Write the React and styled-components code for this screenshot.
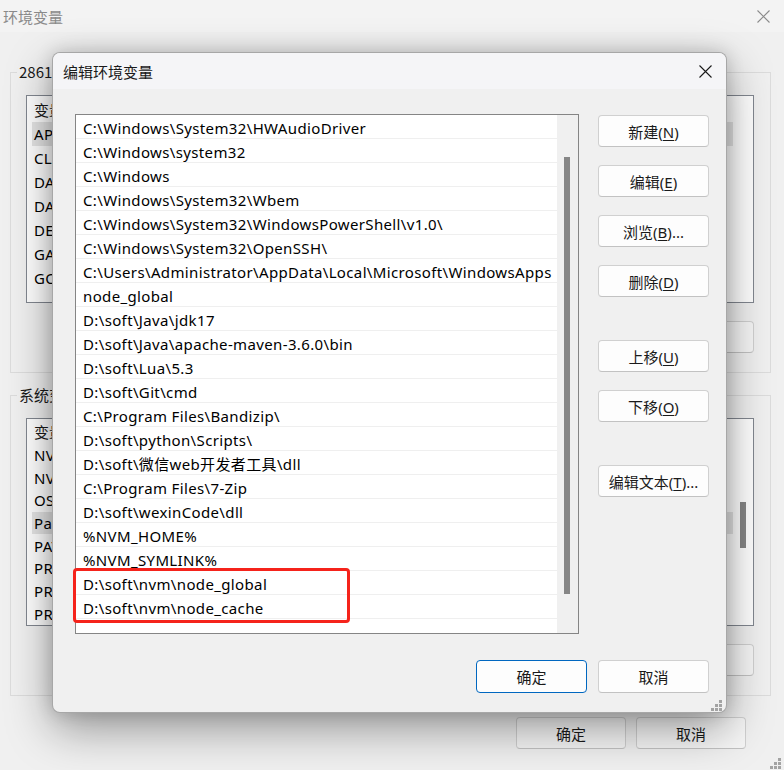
import React from "react";
import styled, { createGlobalStyle } from "styled-components";

const GlobalStyle = createGlobalStyle`
  html, body {
    margin: 0;
    padding: 0;
    background: #f0f0f0;
  }
  body {
    font-family: "Noto Sans", "Noto Sans CJK SC", sans-serif;
    color: #000;
  }
  * {
    box-sizing: border-box;
  }
`;

// Ventana de fondo
const Window = styled.div`
  position: relative;
  width: 784px;
  height: 770px;
  background: #f0f0f0;
  overflow: hidden;
  display: flex;
  flex-direction: column;
`;

const TitleBar = styled.div`
  height: ${(p) => p.$height}px;
  flex: none;
  display: flex;
  align-items: center;
  justify-content: space-between;
  padding: ${(p) => p.$pad};
  background: ${(p) => p.$bg};
`;

const TitleText = styled.span`
  font-family: "Noto Sans CJK SC", sans-serif;
  font-size: 15px;
  color: ${(p) => (p.$dim ? "#8a8a8a" : "#1a1a1a")};
`;

const Body = styled.div`
  display: flex;
  flex-direction: column;
  padding: 30px 13px 0 10px;
`;

const Group = styled.fieldset`
  margin: 0;
  min-width: 0;
  border: 1px solid #dcdcdc;
  padding: 13px 16px 19px 15px;

  & + & {
    margin-top: 12px;
  }
`;

const Legend = styled.legend`
  font-family: "Noto Sans CJK SC", sans-serif;
  font-size: 15px;
  line-height: 20px;
  padding: 0 2px;
  margin-left: -9px;
  color: #1a1a1a;
`;

const VarList = styled.div`
  display: flex;
  height: 208px;
  background: #fff;
  border: 1px solid #828790;
  overflow: hidden;
`;

const VarColumn = styled.div`
  flex: 1;
  display: flex;
  flex-direction: column;
`;

const VarHeader = styled.div`
  height: 26px;
  display: flex;
  align-items: center;
  padding-left: 7px;
  font-family: "Noto Sans CJK SC", sans-serif;
  font-size: 15px;
  color: #1a1a1a;
`;

const VarRow = styled.div`
  height: 24px;
  margin-left: 5px;
  padding-left: 2px;
  display: flex;
  align-items: center;
  font-size: 15px;
  letter-spacing: 0.3px;
  background: ${(p) => (p.$selected ? "#e5e5e5" : "transparent")};
`;

const Cell = styled.span`
  width: ${(p) => p.$w}px;
  flex: none;
`;

const Track = styled.div`
  width: ${(p) => p.$w}px;
  flex: none;
  display: flex;
  flex-direction: column;
  background: ${(p) => p.$bg};
  padding: ${(p) => p.$pad};
`;

const Thumb = styled.div`
  width: 6px;
  height: ${(p) => p.$h}px;
  background: #868686;
`;

const ButtonRow = styled.div`
  display: flex;
  justify-content: flex-end;
  gap: ${(p) => p.$gap}px;
  margin-top: ${(p) => p.$top}px;
  padding-right: ${(p) => p.$right || 0}px;
`;

const Button = styled.button`
  width: ${(p) => p.$w || 111}px;
  height: ${(p) => p.$h || 32}px;
  flex: none;
  padding: 0;
  font-family: "Noto Sans", "Noto Sans CJK SC", sans-serif;
  font-size: 15px;
  color: #1a1a1a;
  background: ${(p) => (p.$flat ? "#f6f6f6" : "#fdfdfd")};
  border: 1px solid ${(p) => (p.$primary ? "#0067c0" : "#d0d0d0")};
  border-bottom-color: ${(p) => (p.$primary ? "#0067c0" : "#c2c2c2")};
  border-radius: 4px;
  cursor: pointer;
`;

const Key = styled.span`
  text-decoration: underline;
  text-underline-offset: 2px;
`;

// Diálogo modal
const Modal = styled.div`
  position: absolute;
  left: 52px;
  top: 52px;
  width: 675px;
  height: 661px;
  display: flex;
  flex-direction: column;
  background: #f0f0f0;
  border: 1px solid rgba(0, 0, 0, 0.3);
  border-radius: 8px;
  box-shadow: 0 16px 46px rgba(0, 0, 0, 0.38), 0 0 18px rgba(0, 0, 0, 0.16);
  overflow: hidden;
`;

const ModalBody = styled.div`
  flex: 1;
  display: flex;
  flex-direction: column;
  padding: 25px 17px 0 22px;
`;

const ModalMain = styled.div`
  display: flex;
  gap: 19px;
`;

const PathList = styled.div`
  position: relative;
  width: 504px;
  height: 520px;
  display: flex;
  background: #fff;
  border: 1px solid #858585;
`;

const PathColumn = styled.div`
  flex: 1;
  display: flex;
  flex-direction: column;
`;

const PathRow = styled.div`
  height: 24px;
  flex: none;
  display: flex;
  align-items: center;
  padding: 2px 0 0 7px;
  border-bottom: 1px solid #efefef;
  font-size: 15px;
  letter-spacing: 0.36px;
  white-space: nowrap;
`;

const Highlight = styled.div`
  position: absolute;
  left: -3px;
  top: 453px;
  width: 277px;
  height: 55px;
  border: 3px solid #f5231b;
  border-radius: 4px;
  pointer-events: none;
`;

const SideButtons = styled.div`
  display: flex;
  flex-direction: column;
  gap: 43px;
  margin-top: 1px;
`;

const SideGroup = styled.div`
  display: flex;
  flex-direction: column;
  gap: 18px;
`;

const Grip = styled.svg`
  position: absolute;
  right: ${(p) => p.$r}px;
  bottom: ${(p) => p.$b}px;
`;

const CloseIcon = ({ color }) => (
  <svg width="13" height="13" viewBox="0 0 13 13">
    <path d="M0.5 0.5 L12.5 12.5 M12.5 0.5 L0.5 12.5" stroke={color} strokeWidth="1.1" fill="none" />
  </svg>
);

const GripDots = ({ r, b }) => (
  <Grip $r={r} $b={b} width="11" height="11" viewBox="0 0 11 11">
    {[
      [8, 0],
      [4, 4],
      [8, 4],
      [0, 8],
      [4, 8],
      [8, 8],
    ].map(([x, y], i) => (
      <rect key={i} x={x} y={y} width="3" height="3" fill="#a3a3a3" />
    ))}
  </Grip>
);

const userVars = ["APPDATA", "CLASSPATH", "DATA_HOME", "DATA_PATH", "DEV_HOME", "GATEWAY", "GOPATH"];
const systemVars = ["NVM_HOME", "NVM_SYMLINK", "OS", "Path", "PATHEXT", "PROCESSOR_ARCHITECTURE", "PROCESSOR_IDENTIFIER", "PROCESSOR_LEVEL"];

const paths = [
  "C:\\Windows\\System32\\HWAudioDriver",
  "C:\\Windows\\system32",
  "C:\\Windows",
  "C:\\Windows\\System32\\Wbem",
  "C:\\Windows\\System32\\WindowsPowerShell\\v1.0\\",
  "C:\\Windows\\System32\\OpenSSH\\",
  "C:\\Users\\Administrator\\AppData\\Local\\Microsoft\\WindowsApps",
  "node_global",
  "D:\\soft\\Java\\jdk17",
  "D:\\soft\\Java\\apache-maven-3.6.0\\bin",
  "D:\\soft\\Lua\\5.3",
  "D:\\soft\\Git\\cmd",
  "C:\\Program Files\\Bandizip\\",
  "D:\\soft\\python\\Scripts\\",
  "D:\\soft\\微信web开发者工具\\dll",
  "C:\\Program Files\\7-Zip",
  "D:\\soft\\wexinCode\\dll",
  "%NVM_HOME%",
  "%NVM_SYMLINK%",
  "D:\\soft\\nvm\\node_global",
  "D:\\soft\\nvm\\node_cache",
];

const Label = ({ text, k, tail = "" }) => (
  <>
    {text}(<Key>{k}</Key>){tail}
  </>
);

const VarBox = ({ items, selected, thumb }) => (
  <VarList>
    <VarColumn>
      <VarHeader>
        <Cell $w={240}>变量</Cell>
        <span>值</span>
      </VarHeader>
      {items.map((name, i) => (
        <VarRow key={name} $selected={i === selected}>
          <Cell $w={240}>{name}</Cell>
        </VarRow>
      ))}
    </VarColumn>
    <Track $w={20} $bg="transparent" $pad={thumb ? "83px 7px 0" : "0"}>
      {thumb && <Thumb $h={46} />}
    </Track>
  </VarList>
);

const App = () => {
  return (
    <>
      <GlobalStyle />
      <Window>
        <TitleBar $height={32} $pad="0 14px 0 3px" $bg="#f3f3f3">
          <TitleText $dim>环境变量</TitleText>
          <CloseIcon color="#8a8a8a" />
        </TitleBar>
        <Body>
          <Group>
            <Legend>28617 的用户变量(U)</Legend>
            <VarBox items={userVars} selected={0} />
            <ButtonRow $gap={10} $top={18}>
              <Button $flat>
                <Label text="新建" k="N" />...
              </Button>
              <Button $flat>
                <Label text="编辑" k="E" />...
              </Button>
              <Button $flat>
                <Label text="删除" k="D" />
              </Button>
            </ButtonRow>
          </Group>
          <Group>
            <Legend>系统变量(S)</Legend>
            <VarBox items={systemVars} selected={3} thumb />
            <ButtonRow $gap={10} $top={18}>
              <Button $flat>
                <Label text="新建" k="W" />...
              </Button>
              <Button $flat>
                <Label text="编辑" k="I" />...
              </Button>
              <Button $flat>
                <Label text="删除" k="L" />
              </Button>
            </ButtonRow>
          </Group>
          <ButtonRow $gap={10} $top={21} $right={25}>
            <Button $flat $w={110}>确定</Button>
            <Button $flat $w={110}>取消</Button>
          </ButtonRow>
        </Body>
        <GripDots r={3} b={1} />

        <Modal>
          <TitleBar $height={36} $pad="0 14px 0 10px" $bg="#f5f5f7">
            <TitleText>编辑环境变量</TitleText>
            <CloseIcon color="#1a1a1a" />
          </TitleBar>
          <ModalBody>
            <ModalMain>
              <PathList>
                <PathColumn>
                  {paths.map((p) => (
                    <PathRow key={p}>{p}</PathRow>
                  ))}
                </PathColumn>
                <Track $w={21} $bg="#f0f0f0" $pad="42px 8px 0 7px">
                  <Thumb $h={437} />
                </Track>
                <Highlight />
              </PathList>
              <SideButtons>
                <SideGroup>
                  <Button>
                    <Label text="新建" k="N" />
                  </Button>
                  <Button>
                    <Label text="编辑" k="E" />
                  </Button>
                  <Button>
                    <Label text="浏览" k="B" tail="..." />
                  </Button>
                  <Button>
                    <Label text="删除" k="D" />
                  </Button>
                </SideGroup>
                <SideGroup>
                  <Button>
                    <Label text="上移" k="U" />
                  </Button>
                  <Button>
                    <Label text="下移" k="O" />
                  </Button>
                </SideGroup>
                <SideGroup>
                  <Button>
                    <Label text="编辑文本" k="T" tail="..." />
                  </Button>
                </SideGroup>
              </SideButtons>
            </ModalMain>
            <ButtonRow $gap={11} $top={26}>
              <Button $primary $h={33}>确定</Button>
              <Button $h={33}>取消</Button>
            </ButtonRow>
          </ModalBody>
          <GripDots r={4} b={1} />
        </Modal>
      </Window>
    </>
  );
};

export default App;
